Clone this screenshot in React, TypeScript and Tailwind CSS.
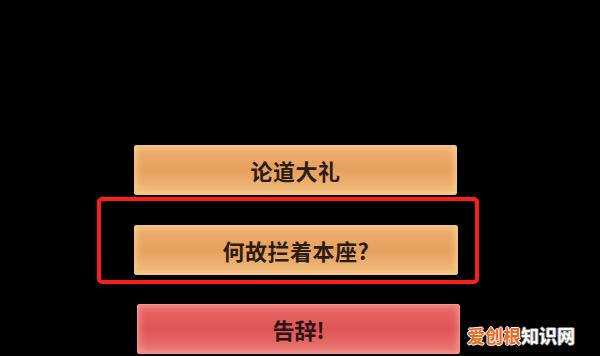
import React from 'react';

const font = { fontFamily: '"Noto Sans CJK SC", "Noto Sans", sans-serif' };

function GoldButton({ label, className }: { label: string; className?: string }) {
  return (
    <div
      className={`flex h-[50px] items-center justify-center rounded-[2px] border border-[#f4c387] bg-linear-to-b from-[#eeb070] via-[#e7a05e] to-[#f0bd7e] shadow-[inset_0_0_6px_2px_rgba(255,215,150,0.65),0_0_2px_rgba(0,0,0,0.8)] text-[22px] font-bold tracking-[0.5px] text-[#2b1d14] ${className ?? ''}`}
    >
      {label}
    </div>
  );
}

export default function App() {
  return (
    <div className="relative h-[356px] w-[600px] overflow-hidden bg-black" style={font}>
      <div className="flex flex-col pt-[145px]">
        {/* first option */}
        <GoldButton label="论道大礼" className="ml-[134px] w-[323px]" />

        {/* highlighted option */}
        <div className="ml-[97px] mt-[2px] w-[382px] rounded-[5px] border-[4.5px] border-[#ff1e12] pb-[5px] pl-[33px] pt-[24px]">
          <GoldButton label="何故拦着本座?" className="w-[324px]" />
        </div>

        {/* leave */}
        <div className="ml-[137px] mt-[20px] flex h-[50px] w-[323px] items-center justify-center rounded-[2px] border border-[#f39790] bg-linear-to-b from-[#e66866] via-[#df5555] to-[#e97872] shadow-[inset_0_0_6px_2px_rgba(255,165,155,0.6)] text-[22px] font-bold text-[#2b1414]">
          告辞!
        </div>
      </div>

      {/* watermark */}
      <div className="absolute left-[467px] top-[324px] flex text-[18px] font-bold leading-[22px]">
        <span className="text-[#f2661c] [text-shadow:1px_0_0_#fff,-1px_0_0_#fff,0_1px_0_#fff,0_-1px_0_#fff]">爱创根</span>
        <span className="text-white [text-shadow:1px_0_0_#777,-1px_0_0_#777,0_1px_0_#777,0_-1px_0_#777]">知识网</span>
      </div>
    </div>
  );
}
